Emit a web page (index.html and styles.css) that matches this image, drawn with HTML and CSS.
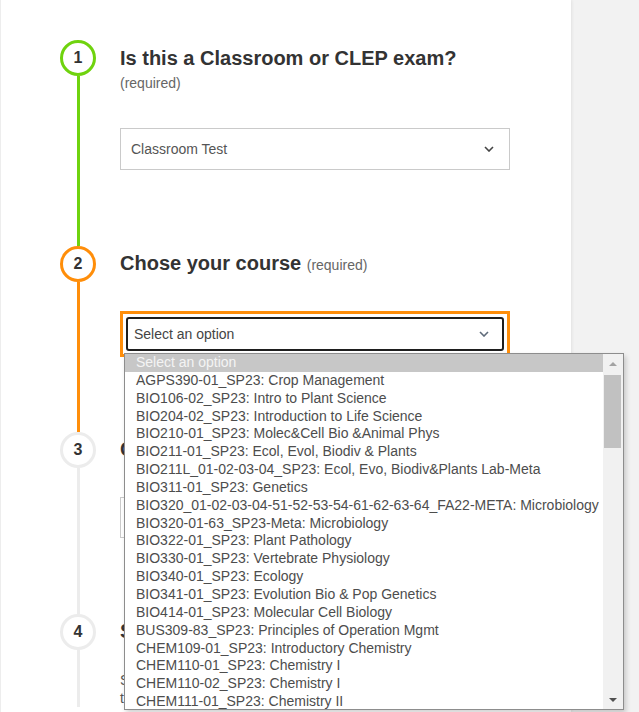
FILE: index.html
```html
<!DOCTYPE html>
<html lang="en">
<head>
<meta charset="utf-8">
<title>Exam Booking</title>
<link rel="stylesheet" href="styles.css">
</head>
<body>
<div class="page">
  <main class="panel">
    <section class="step step-done">
      <div class="rail">
        <div class="circle">1</div>
        <div class="line"></div>
      </div>
      <div class="content">
        <h2 class="title">Is this a Classroom or CLEP exam?</h2>
        <div class="req-block">(required)</div>
        <div class="select">
          <span class="select-text">Classroom Test</span>
          <svg class="chev" width="10" height="6" viewBox="0 0 10 6"><polyline points="1,1 5,5 9,1" fill="none" stroke="#444" stroke-width="1.6"/></svg>
        </div>
      </div>
    </section>

    <section class="step step-active">
      <div class="rail">
        <div class="circle">2</div>
        <div class="line"></div>
      </div>
      <div class="content">
        <h2 class="title">Chose your course <span class="req">(required)</span></h2>
        <div class="focus-wrap">
          <div class="select-focused">
            <span class="select-text dark">Select an option</span>
            <svg class="chev" width="10" height="6" viewBox="0 0 10 6"><polyline points="1,1 5,5 9,1" fill="none" stroke="#5f6b7a" stroke-width="1.6"/></svg>
          </div>
          <div class="dropdown">
            <ul class="options">
              <li class="opt selected">Select an option</li>
              <li class="opt">AGPS390-01_SP23: Crop Management</li>
              <li class="opt">BIO106-02_SP23: Intro to Plant Science</li>
              <li class="opt">BIO204-02_SP23: Introduction to Life Science</li>
              <li class="opt">BIO210-01_SP23: Molec&amp;Cell Bio &amp;Animal Phys</li>
              <li class="opt">BIO211-01_SP23: Ecol, Evol, Biodiv &amp; Plants</li>
              <li class="opt">BIO211L_01-02-03-04_SP23: Ecol, Evo, Biodiv&amp;Plants Lab-Meta</li>
              <li class="opt">BIO311-01_SP23: Genetics</li>
              <li class="opt">BIO320_01-02-03-04-51-52-53-54-61-62-63-64_FA22-META: Microbiology</li>
              <li class="opt">BIO320-01-63_SP23-Meta: Microbiology</li>
              <li class="opt">BIO322-01_SP23: Plant Pathology</li>
              <li class="opt">BIO330-01_SP23: Vertebrate Physiology</li>
              <li class="opt">BIO340-01_SP23: Ecology</li>
              <li class="opt">BIO341-01_SP23: Evolution Bio &amp; Pop Genetics</li>
              <li class="opt">BIO414-01_SP23: Molecular Cell Biology</li>
              <li class="opt">BUS309-83_SP23: Principles of Operation Mgmt</li>
              <li class="opt">CHEM109-01_SP23: Introductory Chemistry</li>
              <li class="opt">CHEM110-01_SP23: Chemistry I</li>
              <li class="opt">CHEM110-02_SP23: Chemistry I</li>
              <li class="opt">CHEM111-01_SP23: Chemistry II</li>
            </ul>
            <div class="scrollbar">
              <div class="arrow-area"><span class="arrow up"></span></div>
              <div class="thumb"></div>
              <div class="track-rest"></div>
              <div class="arrow-area bottom"><span class="arrow down"></span></div>
            </div>
          </div>
        </div>
      </div>
    </section>

    <section class="step">
      <div class="rail">
        <div class="circle">3</div>
        <div class="line"></div>
      </div>
      <div class="content">
        <h2 class="title">Choose your exam</h2>
        <div class="select short">
          <span class="select-text">Select an option</span>
        </div>
      </div>
    </section>

    <section class="step">
      <div class="rail">
        <div class="circle">4</div>
        <div class="line"></div>
      </div>
      <div class="content">
        <h2 class="title">Select a date and time</h2>
        <p class="desc">Select an available date and time for your exam,<br>then confirm your reservation.</p>
      </div>
    </section>
  </main>
  <aside class="side"></aside>
</div>
</body>
</html>
```

FILE: styles.css
```css
* { box-sizing: border-box; }

html, body {
  margin: 0;
  padding: 0;
  height: 100%;
  overflow: hidden;
}

body {
  font-family: "Liberation Sans", Arial, sans-serif;
  color: #333;
  background: #f2f2f2;
}

.page {
  display: flex;
  height: 712px;
  overflow: hidden;
}

.panel {
  width: 571px;
  flex: none;
  background: #fff;
  border-left: 1px solid #ededed;
  padding: 40px 60px 0 59px;
  box-shadow: 1px 0 3px rgba(0, 0, 0, 0.07);
  position: relative;
  z-index: 1;
}

.side {
  flex: 1;
  background: #f2f2f2;
}

.step {
  display: flex;
  gap: 24px;
}

.step:nth-child(1) .content { padding-bottom: 76px; }
.step:nth-child(2) .content { padding-bottom: 75px; }
.step:nth-child(3) .content { padding-bottom: 76px; }
.step:nth-child(4) .content { padding-bottom: 0; }

.rail {
  width: 36px;
  flex: none;
  display: flex;
  flex-direction: column;
  align-items: center;
}

.circle {
  width: 36px;
  height: 36px;
  border-radius: 50%;
  border: 3px solid #ececec;
  display: flex;
  align-items: center;
  justify-content: center;
  font-weight: bold;
  font-size: 16px;
  color: #333;
  background: #fff;
  flex: none;
}

.line {
  width: 3px;
  flex: 1;
  background: #ececec;
}

.step-done .circle { border-color: #6fd30e; }
.step-done .line { background: #6fd30e; }
.step-active .circle { border-color: #ff8e0a; }
.step-active .line { background: #ff8e0a; }

.content {
  flex: 1;
  min-width: 0;
}

.title {
  margin: 5px 0 0;
  font-size: 20px;
  line-height: 24px;
  font-weight: bold;
  color: #333;
}

.step:nth-child(1) .title { margin-top: 6px; }

.req {
  font-size: 14px;
  line-height: 1;
  font-weight: normal;
  color: #666;
}

.req-block {
  margin-top: 4px;
  font-size: 14px;
  line-height: 18px;
  color: #666;
}

.select {
  margin-top: 36px;
  width: 390px;
  height: 42px;
  border: 1px solid #cacaca;
  display: flex;
  align-items: center;
  justify-content: space-between;
  padding: 0 15px 0 10px;
  background: #fff;
}

.select.short { height: 41px; }

.select-text {
  font-size: 14px;
  color: #555;
}

.select-text.dark { color: #444; }

.chev { display: block; }

.focus-wrap {
  position: relative;
  margin-top: 36px;
  width: 390px;
  border: 3px solid #ff8e0a;
  padding: 3px;
  z-index: 5;
}

.select-focused {
  height: 34px;
  border: 2px solid #1e1e1e;
  border-radius: 3px;
  display: flex;
  align-items: center;
  justify-content: space-between;
  padding: 0 13px 0 6px;
  background: #fff;
}

.dropdown {
  position: absolute;
  top: 39px;
  left: 1px;
  width: 500px;
  height: 357px;
  border: 1px solid #8d8d8d;
  background: #fff;
  display: flex;
  overflow: hidden;
  box-shadow: 2px 3px 5px rgba(0, 0, 0, 0.18);
}

.options {
  list-style: none;
  margin: 0;
  padding: 0;
  flex: 1;
  min-width: 0;
}

.opt {
  height: 17.85px;
  line-height: 17.85px;
  font-size: 14px;
  color: #4d4d4d;
  padding-left: 11px;
  white-space: nowrap;
}

.opt.selected {
  background: #c7c7c7;
  color: #f4f4f4;
}

.scrollbar {
  width: 20px;
  flex: none;
  background: #f1f1f1;
  display: flex;
  flex-direction: column;
}

.arrow-area {
  height: 20px;
  display: flex;
  align-items: center;
  justify-content: center;
  flex: none;
}

.arrow-area.bottom { height: 18px; }

.arrow {
  width: 0;
  height: 0;
  border-left: 4px solid transparent;
  border-right: 4px solid transparent;
}

.arrow.up { border-bottom: 4px solid #a3a3a3; }
.arrow.down { border-top: 4px solid #505050; }

.thumb {
  margin: 1px 2px 0 1px;
  height: 73px;
  background: #c1c1c1;
  flex: none;
}

.track-rest { flex: 1; }

.desc {
  margin: 28px 0 0;
  font-size: 14px;
  line-height: 18px;
  color: #555;
}
```
